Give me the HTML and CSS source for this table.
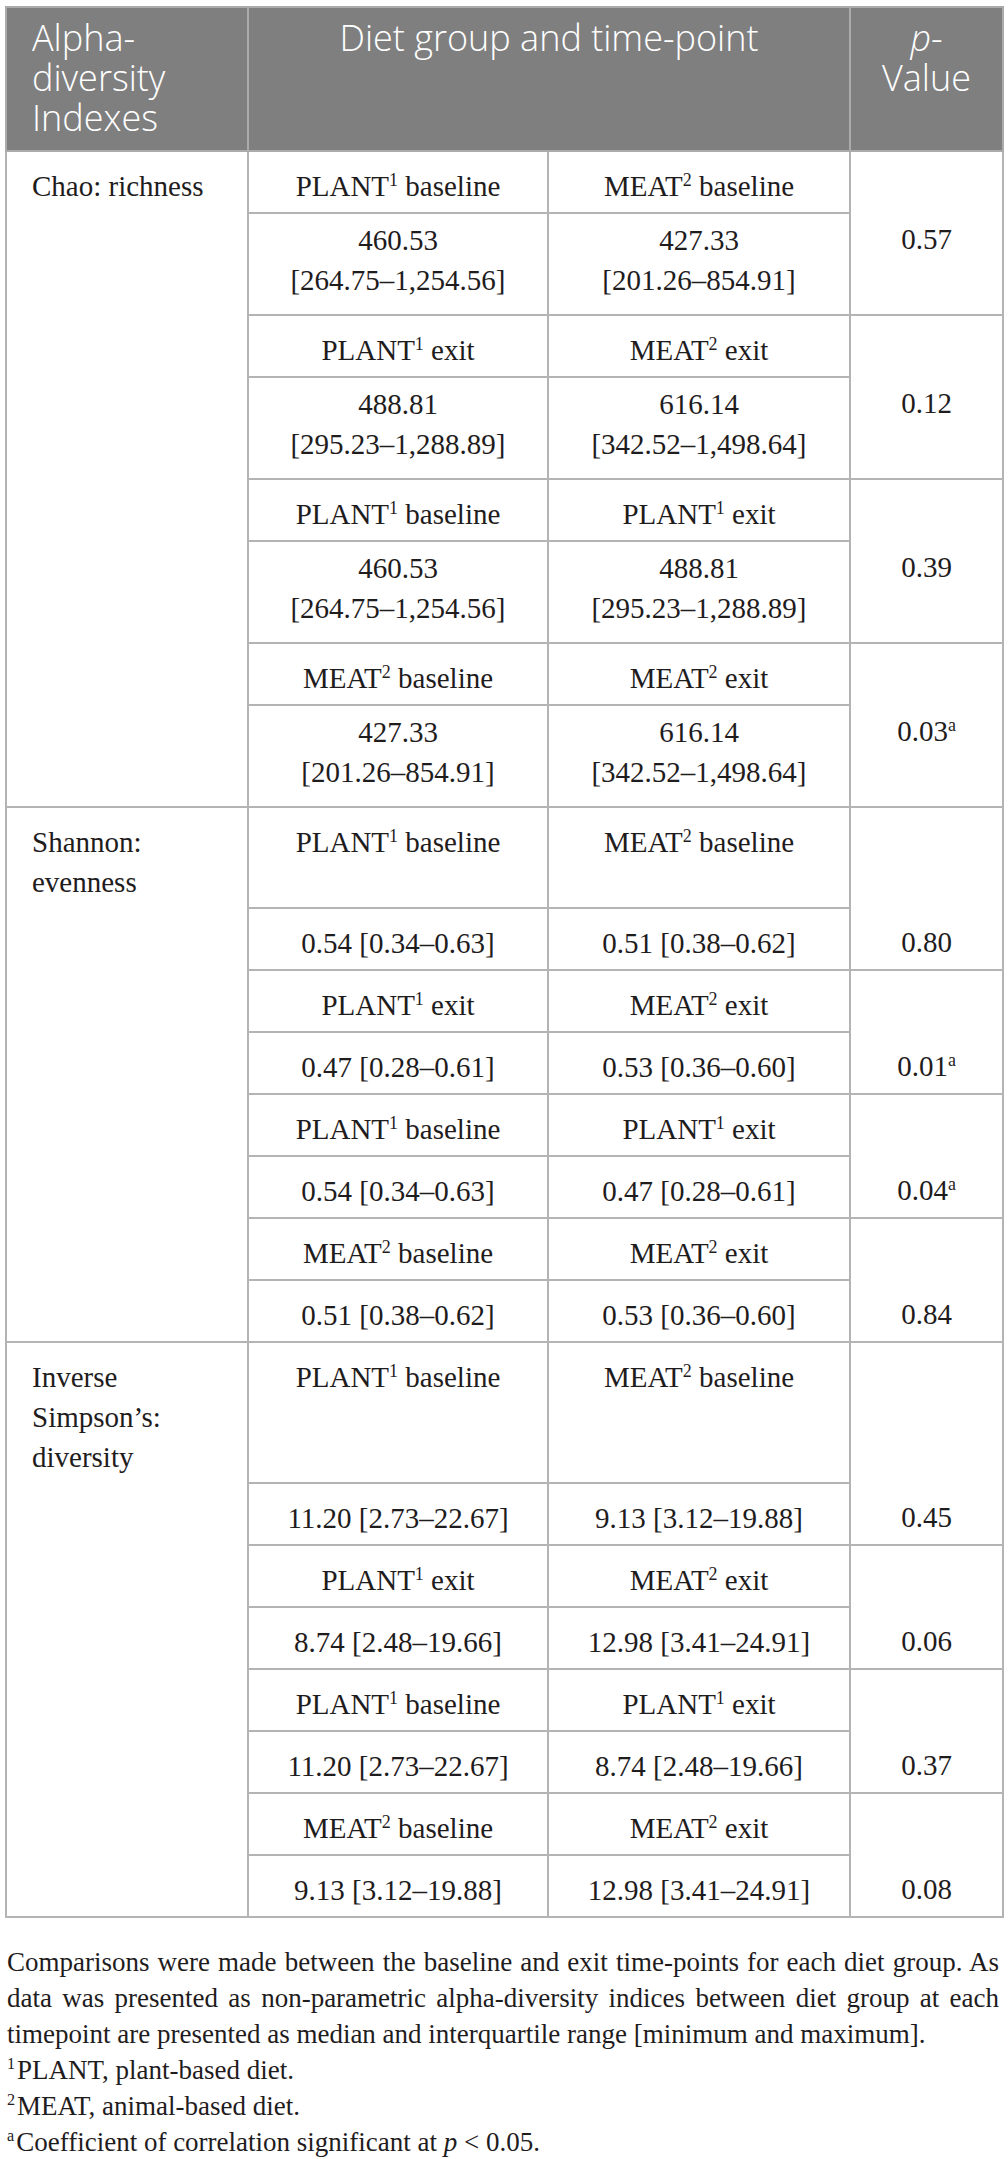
FILE: index.html
```
<!DOCTYPE html>
<html>

<head>
	<meta charset="utf-8">
	<meta name="viewport" content="width=device-width, initial-scale=1">
	<title>Alpha-diversity indexes</title>
	<link rel="stylesheet" href="styles.css">
</head>

<body>
	<div class="wrap">
		<table class="alpha">
			<colgroup>
				<col class="c-idx">
				<col class="c-grp">
				<col class="c-grp2">
				<col class="c-p">
			</colgroup>
			<thead>
				<tr>
					<th class="left">Alpha-diversity Indexes</th>
					<th colspan="2">Diet group and time-point</th>
					<th><i>p</i>-Value</th>
				</tr>
			</thead>
			<tbody>
				<!-- Chao -->
				<tr>
					<td class="lbl">Chao: richness</td>
					<td>PLANT<sup>1</sup> baseline</td>
					<td>MEAT<sup>2</sup> baseline</td>
					<td class="pe"></td>
				</tr>
				<tr class="v2">
					<td class="lc"></td>
					<td>460.53<br>[264.75–1,254.56]</td>
					<td>427.33<br>[201.26–854.91]</td>
					<td class="pv">0.57</td>
				</tr>
				<tr>
					<td class="lc"></td>
					<td>PLANT<sup>1</sup> exit</td>
					<td>MEAT<sup>2</sup> exit</td>
					<td class="pe"></td>
				</tr>
				<tr class="v2">
					<td class="lc"></td>
					<td>488.81<br>[295.23–1,288.89]</td>
					<td>616.14<br>[342.52–1,498.64]</td>
					<td class="pv">0.12</td>
				</tr>
				<tr>
					<td class="lc"></td>
					<td>PLANT<sup>1</sup> baseline</td>
					<td>PLANT<sup>1</sup> exit</td>
					<td class="pe"></td>
				</tr>
				<tr class="v2">
					<td class="lc"></td>
					<td>460.53<br>[264.75–1,254.56]</td>
					<td>488.81<br>[295.23–1,288.89]</td>
					<td class="pv">0.39</td>
				</tr>
				<tr>
					<td class="lc"></td>
					<td>MEAT<sup>2</sup> baseline</td>
					<td>MEAT<sup>2</sup> exit</td>
					<td class="pe"></td>
				</tr>
				<tr class="v2">
					<td class="lc end"></td>
					<td>427.33<br>[201.26–854.91]</td>
					<td>616.14<br>[342.52–1,498.64]</td>
					<td class="pv">0.03<sup>a</sup></td>
				</tr>
				<!-- Shannon -->
				<tr>
					<td class="lbl">Shannon: evenness</td>
					<td>PLANT<sup>1</sup> baseline</td>
					<td>MEAT<sup>2</sup> baseline</td>
					<td class="pe"></td>
				</tr>
				<tr>
					<td class="lc"></td>
					<td>0.54 [0.34–0.63]</td>
					<td>0.51 [0.38–0.62]</td>
					<td class="pv">0.80</td>
				</tr>
				<tr>
					<td class="lc"></td>
					<td>PLANT<sup>1</sup> exit</td>
					<td>MEAT<sup>2</sup> exit</td>
					<td class="pe"></td>
				</tr>
				<tr>
					<td class="lc"></td>
					<td>0.47 [0.28–0.61]</td>
					<td>0.53 [0.36–0.60]</td>
					<td class="pv">0.01<sup>a</sup></td>
				</tr>
				<tr>
					<td class="lc"></td>
					<td>PLANT<sup>1</sup> baseline</td>
					<td>PLANT<sup>1</sup> exit</td>
					<td class="pe"></td>
				</tr>
				<tr>
					<td class="lc"></td>
					<td>0.54 [0.34–0.63]</td>
					<td>0.47 [0.28–0.61]</td>
					<td class="pv">0.04<sup>a</sup></td>
				</tr>
				<tr>
					<td class="lc"></td>
					<td>MEAT<sup>2</sup> baseline</td>
					<td>MEAT<sup>2</sup> exit</td>
					<td class="pe"></td>
				</tr>
				<tr>
					<td class="lc end"></td>
					<td>0.51 [0.38–0.62]</td>
					<td>0.53 [0.36–0.60]</td>
					<td class="pv">0.84</td>
				</tr>
				<!-- Inverse Simpson -->
				<tr>
					<td class="lbl">Inverse Simpson’s: diversity</td>
					<td>PLANT<sup>1</sup> baseline</td>
					<td>MEAT<sup>2</sup> baseline</td>
					<td class="pe"></td>
				</tr>
				<tr>
					<td class="lc"></td>
					<td>11.20 [2.73–22.67]</td>
					<td>9.13 [3.12–19.88]</td>
					<td class="pv">0.45</td>
				</tr>
				<tr>
					<td class="lc"></td>
					<td>PLANT<sup>1</sup> exit</td>
					<td>MEAT<sup>2</sup> exit</td>
					<td class="pe"></td>
				</tr>
				<tr>
					<td class="lc"></td>
					<td>8.74 [2.48–19.66]</td>
					<td>12.98 [3.41–24.91]</td>
					<td class="pv">0.06</td>
				</tr>
				<tr>
					<td class="lc"></td>
					<td>PLANT<sup>1</sup> baseline</td>
					<td>PLANT<sup>1</sup> exit</td>
					<td class="pe"></td>
				</tr>
				<tr>
					<td class="lc"></td>
					<td>11.20 [2.73–22.67]</td>
					<td>8.74 [2.48–19.66]</td>
					<td class="pv">0.37</td>
				</tr>
				<tr>
					<td class="lc"></td>
					<td>MEAT<sup>2</sup> baseline</td>
					<td>MEAT<sup>2</sup> exit</td>
					<td class="pe"></td>
				</tr>
				<tr>
					<td class="lc end"></td>
					<td>9.13 [3.12–19.88]</td>
					<td>12.98 [3.41–24.91]</td>
					<td class="pv">0.08</td>
				</tr>
			</tbody>
		</table>

		<div class="notes">
			<p class="lead">Comparisons were made between the baseline and exit time-points for each diet group. As data was presented as non-parametric alpha-diversity indices between diet group at each timepoint are presented as median and interquartile range [minimum and maximum].</p>
			<p><sup>1</sup>PLANT, plant-based diet.</p>
			<p><sup>2</sup>MEAT, animal-based diet.</p>
			<p><sup>a</sup>Coefficient of correlation significant at <i>p</i> &lt; 0.05.</p>
		</div>
	</div>
</body>

</html>
```

FILE: styles.css
```
* {
	margin: 0;
	padding: 0;
	box-sizing: border-box;
}

body {
	background: #fff;
	color: #1f1c1d;
	font-family: "Liberation Serif", "Times New Roman", serif;
}

.wrap {
	padding: 6px 5px;
}

.alpha {
	width: 100%;
	table-layout: fixed;
	border-collapse: collapse;
}

.c-idx {
	width: 242px;
}
.c-grp {
	width: 300px;
}
.c-grp2 {
	width: 302px;
}
.c-p {
	width: 153px;
}

th,
td {
	border: 2px solid #b4b4b4;
	vertical-align: top;
}

th {
	background-color: #7f7f7f;
	color: #fff;
	font-family: "Open Sans", "Noto Sans", sans-serif;
	font-weight: 300;
	font-size: 36px;
	line-height: 40px;
	text-align: center;
	padding: 10px 25px 12px;
	border-color: #ababab;
}
th.left {
	text-align: left;
}

td {
	font-size: 29px;
	line-height: 40px;
	text-align: center;
	padding: 14px 14px 6px;
}

/* two-line value rows sit a little higher in their cells */
tr.v2 td {
	padding-top: 6px;
	padding-bottom: 14px;
}

td.lbl,
td.lc {
	text-align: left;
	padding-left: 25px;
}
td.lbl {
	border-bottom: none;
}
td.lc {
	border-top: none;
	border-bottom: none;
}
td.lc.end {
	border-bottom: 2px solid #b4b4b4;
}

td.pe {
	border-bottom: none;
}
td.pv {
	border-top: none;
}

sup {
	font-size: 0.62em;
	line-height: 0;
	vertical-align: 0.55em;
}

.notes {
	margin-top: 26px;
	padding: 0 4px 0 2px;
	font-size: 27px;
	line-height: 36px;
}
.notes .lead {
	text-align: justify;
}
.notes sup {
	font-size: 0.6em;
	vertical-align: 0.6em;
	margin-right: 2px;
}
```
